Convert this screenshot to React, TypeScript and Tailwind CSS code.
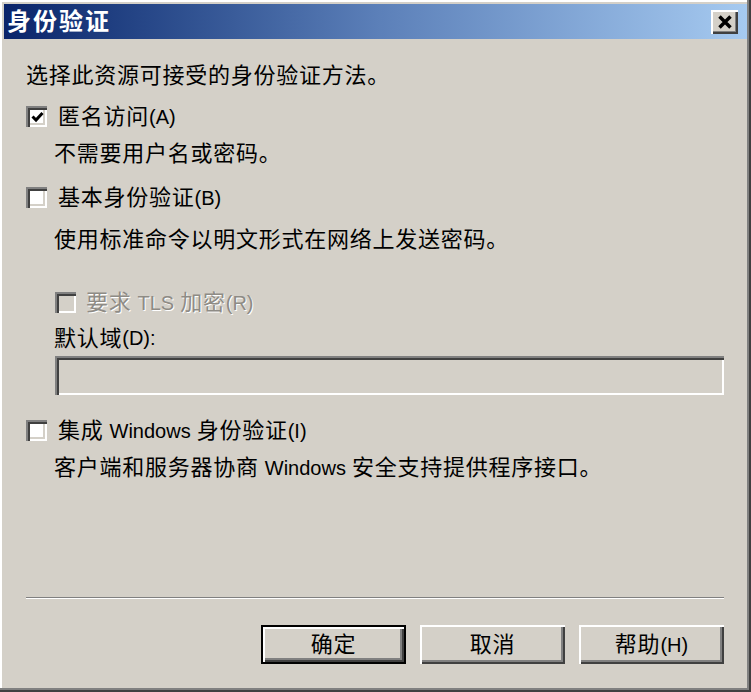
import React from 'react';

const FONT = "'Liberation Sans','Noto Sans CJK SC',sans-serif";

const Check = ({ checked = false, disabled = false }: { checked?: boolean; disabled?: boolean }) => (
  <div
    className={`w-[21px] h-[21px] shrink-0 flex items-center justify-center shadow-[inset_2px_2px_0_#808080,inset_4px_4px_0_#404040,inset_-2px_-2px_0_#ffffff,inset_-4px_-4px_0_#d4d0c8] ${
      disabled ? 'bg-[#d4d0c8]' : 'bg-white'
    }`}
  >
    {checked && (
      <svg width="13" height="12" viewBox="0 0 13 12" className="ml-[1px] mt-[1px]">
        <path d="M1.5 5.5 L5 9 L11.5 2" stroke="#000" strokeWidth="3" fill="none" />
      </svg>
    )}
  </div>
);

const Latin = ({ children }: { children: React.ReactNode }) => (
  <span className="text-[20px] tracking-normal">{children}</span>
);

const Gap = () => <span className="inline-block w-[6px]" />;

const Button = ({ label, isDefault = false }: { label: React.ReactNode; isDefault?: boolean }) => (
  <div
    className={`w-[145px] h-[39px] flex items-center justify-center bg-[#d4d0c8] text-[22px] text-black ${
      isDefault
        ? 'border-2 border-black shadow-[inset_2px_2px_0_#ffffff,inset_-2px_-2px_0_#404040,inset_-4px_-4px_0_#808080]'
        : 'shadow-[inset_2px_2px_0_#ffffff,inset_-2px_-2px_0_#404040,inset_-4px_-4px_0_#808080]'
    }`}
  >
    {label}
  </div>
);

export default function App() {
  return (
    <div
      className="w-[751px] h-[692px] bg-[#d4d0c8] flex flex-col p-[4px] shadow-[inset_-2px_-2px_0_#404040,inset_-4px_-4px_0_#808080,inset_2px_2px_0_#ffffff] tracking-[0.75px] text-[22px] text-black"
      style={{ fontFamily: FONT }}
    >
      {/* title bar */}
      <div className="h-[35px] flex items-center justify-between bg-gradient-to-r from-[#0a246a] via-[#5b7fb8] to-[#a6caf0] pl-[3px] pr-[9px]">
        <span className="text-white font-bold text-[24px] tracking-[2px] leading-none">身份验证</span>
        <div className="w-[27px] h-[24px] bg-[#d4d0c8] flex items-center justify-center shadow-[inset_2px_2px_0_#ffffff,inset_-2px_-2px_0_#404040,inset_-3px_-3px_0_#808080]">
          <svg width="16" height="14" viewBox="0 0 16 14">
            <path d="M2.5 1.5 L13.5 12.5 M13.5 1.5 L2.5 12.5" stroke="#000" strokeWidth="3.5" />
          </svg>
        </div>
      </div>

      <div className="flex-1 flex flex-col pl-[22px] pr-[23px]">
        <div className="h-[30px] mt-[21px] flex items-center">选择此资源可接受的身份验证方法。</div>

        <div className="h-[30px] mt-[11px] flex items-center">
          <Check checked />
          <span className="ml-[11px]">
            匿名访问<Latin>(A)</Latin>
          </span>
        </div>
        <div className="h-[30px] mt-[7px] flex items-center pl-[28px]">不需要用户名或密码。</div>

        <div className="h-[30px] mt-[14px] flex items-center">
          <Check />
          <span className="ml-[11px]">
            基本身份验证<Latin>(B)</Latin>
          </span>
        </div>
        <div className="h-[30px] mt-[12px] flex items-center pl-[28px]">使用标准命令以明文形式在网络上发送密码。</div>

        <div className="h-[30px] mt-[33px] flex items-center pl-[29px]">
          <Check disabled />
          <span className="ml-[10px] text-[#8e8b85] [text-shadow:1px_1px_0_#ffffff]">
            要求<Gap /><Latin>TLS</Latin><Gap />加密<Latin>(R)</Latin>
          </span>
        </div>
        <div className="h-[30px] mt-[6px] flex items-center pl-[28px]">
          默认域<Latin>(D):</Latin>
        </div>
        <div className="h-[39px] mt-[3px] ml-[29px] bg-[#d4d0c8] shadow-[inset_2px_2px_0_#808080,inset_4px_4px_0_#404040,inset_-2px_-2px_0_#ffffff]" />

        <div className="h-[30px] mt-[20px] flex items-center">
          <Check />
          <span className="ml-[11px]">
            集成<Gap /><Latin>Windows</Latin><Gap />身份验证<Latin>(I)</Latin>
          </span>
        </div>
        <div className="h-[30px] mt-[7px] flex items-center pl-[28px]">
          <span>
            客户端和服务器协商<Gap /><Latin>Windows</Latin><Gap />安全支持提供程序接口。
          </span>
        </div>

        <div className="flex-1" />

        <div className="h-[2px] border-t border-[#808080] border-b border-b-white" />

        <div className="flex justify-end gap-[14px] mt-[26px] mb-[24px]">
          <Button label="确定" isDefault />
          <Button label="取消" />
          <Button
            label={
              <span>
                帮助<Latin>(H)</Latin>
              </span>
            }
          />
        </div>
      </div>
    </div>
  );
}
